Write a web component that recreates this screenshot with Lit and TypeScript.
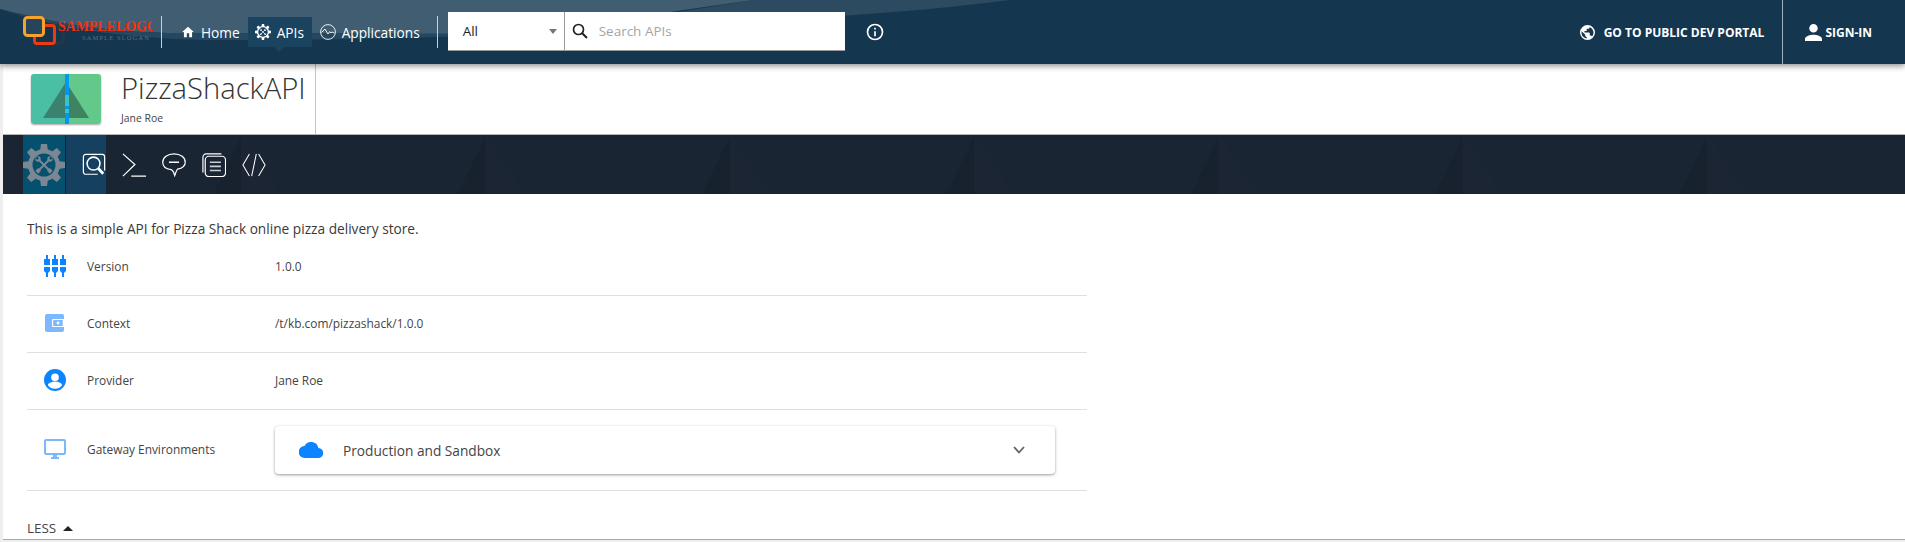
import { LitElement, css, html, svg } from 'lit';
import { customElement } from 'lit/decorators.js';

const GEAR_TEETH = [0, 45, 90, 135, 180, 225, 270, 315];

// same gear is used for the APIs nav item and the left menu button
const gear = (size: number, color: string, hole: string, inner = 11.5) => html`
  <svg width=${size} height=${size} viewBox="0 0 42 42">
    ${GEAR_TEETH.map((a) => svg`<path d="M17 7 18 0H24L25 7Z" fill=${color} transform="rotate(${a} 21 21)"></path>`)}
    <circle cx="21" cy="21" r="16" fill=${color}></circle>
    <circle cx="21" cy="21" r=${inner} fill=${hole}></circle>
    <path d="M15 15 27 27M27 15 15 27" stroke=${color} stroke-width="1.900" stroke-linecap="round"></path>
    <circle cx="15" cy="15" r="2.700" fill=${color}></circle>
    <circle cx="27" cy="15" r="2.700" fill=${color}></circle>
    <circle cx="14.200" cy="14.200" r="1.300" fill=${hole}></circle>
    <circle cx="27.800" cy="14.200" r="1.300" fill=${hole}></circle>
    <rect x="24.800" y="24.800" width="4" height="4" transform="rotate(45 26.800 26.800)" fill=${color}></rect>
    <rect x="13.200" y="24.800" width="4" height="4" transform="rotate(45 15.200 26.800)" fill=${color}></rect>
  </svg>
`;

@customElement('app-root')
export class AppRoot extends LitElement {
  static override styles = css`
    :host {
      display: block;
      height: 542px;
      overflow: hidden;
      background: #eeeeee;
      font-family: 'Open Sans', 'Noto Sans', sans-serif;
      color: #3b3b3b;
    }
    svg {
      display: block;
      flex: none;
    }

    /* top bar */
    .topbar {
      position: relative;
      z-index: 2;
      height: 64px;
      display: flex;
      align-items: center;
      background: #15364f;
      color: #fff;
      box-shadow: 0 2px 6px rgba(0, 0, 0, 0.45);
    }
    .wave {
      position: absolute;
      left: 0;
      top: 0;
    }
    .topbar > *:not(.wave) {
      position: relative;
    }
    .logo {
      width: 130px;
      height: 32px;
      margin-left: 23px;
      overflow: hidden;
      position: relative;
      flex: none;
    }
    .logo-mark {
      position: absolute;
      left: 0;
      top: 0;
    }
    .logo-name {
      position: absolute;
      left: 35px;
      top: 2px;
      font: bold 13.9px/18px 'Liberation Serif', serif;
      color: #f0300f;
      white-space: nowrap;
    }
    .logo-slogan {
      position: absolute;
      left: 59px;
      top: 18px;
      font: 6.5px/8px 'Liberation Serif', serif;
      letter-spacing: 1.1px;
      color: #5d6f7d;
      white-space: nowrap;
    }
    .vline {
      width: 1px;
      height: 32px;
      background: #c9d0d6;
      flex: none;
    }
    .nav {
      display: flex;
      align-items: center;
      height: 30px;
      margin-left: 19px;
      font-size: 13.7px;
    }
    .nav-item {
      display: flex;
      align-items: center;
      gap: 6px;
      height: 30px;
      white-space: nowrap;
    }
    .nav-item.active {
      position: relative;
      width: 64px;
      margin: 0 8px 0 8px;
      padding-left: 7px;
      box-sizing: border-box;
      background: #1a4360;
    }
    .nav-item.active::after {
      content: '';
      position: absolute;
      left: 26px;
      bottom: -5px;
      border: 5px solid transparent;
      border-bottom: 0;
      border-top-color: #1a4360;
    }
    .nav + .vline {
      margin-left: 17px;
    }
    .search {
      display: flex;
      width: 397px;
      height: 39px;
      margin-left: 10px;
      margin-top: -1px;
      background: #fff;
      border-bottom: 1px solid #9a9a9a;
      box-sizing: border-box;
      font-size: 13.5px;
      flex: none;
    }
    .search-cat {
      width: 117px;
      height: 38px;
      display: flex;
      align-items: center;
      justify-content: space-between;
      padding: 0 7px 0 15px;
      box-sizing: border-box;
      border-right: 1px solid #9a9a9a;
      color: #222;
    }
    .search-cat i {
      border: 4px solid transparent;
      border-top: 5px solid #777;
      border-bottom: 0;
    }
    .search-box {
      display: flex;
      align-items: center;
      gap: 11px;
      padding-left: 7px;
      color: #a5a5a5;
    }
    .info {
      margin-left: 20px;
    }
    .spacer {
      flex: 1;
    }
    .portal {
      display: flex;
      align-items: center;
      gap: 9px;
      font-size: 12px;
      font-weight: 700;
      white-space: nowrap;
    }
    .topbar .divider {
      width: 1px;
      height: 64px;
      background: #9fb0bd;
      margin: 0 22px 0 18px;
    }
    .signin {
      display: flex;
      align-items: center;
      gap: 3px;
      margin-right: 33px;
      font-size: 12px;
      font-weight: 700;
    }

    /* main */
    .main {
      margin-left: 3px;
      background: #fff;
      height: 475px;
      border-bottom: 1px solid #a9a9a9;
    }
    .title-row {
      height: 71px;
      box-sizing: border-box;
      border-bottom: 1px solid #b5b5b5;
    }
    .title-box {
      width: 313px;
      height: 70px;
      box-sizing: border-box;
      border-right: 1px solid #c4c4c4;
      display: flex;
      padding-left: 28px;
    }
    .thumb {
      margin-top: 10px;
      width: 70px;
      height: 50px;
      border-radius: 3px;
      overflow: hidden;
      box-shadow: 0 1px 2px rgba(0, 0, 0, 0.35);
      flex: none;
    }
    .title-text {
      margin-left: 20px;
      white-space: nowrap;
    }
    .title-text h1 {
      margin: 5px 0 0;
      font-size: 29.2px;
      line-height: 38px;
      font-weight: 300;
      color: #333;
    }
    .title-text p {
      margin: 4px 0 0;
      font-size: 10.4px;
      line-height: 14px;
      color: #444;
    }
    .menu {
      position: relative;
      height: 59px;
      display: flex;
      background: #1a2533;
      overflow: hidden;
    }
    .shade {
      position: absolute;
      left: 0;
      top: 0;
    }
    .menu > .m {
      position: relative;
    }
    .m-settings {
      width: 42px;
      margin-left: 20px;
      height: 59px;
      display: flex;
      align-items: center;
      background: #05506e;
    }
    .m-overview {
      width: 40px;
      margin-left: 1px;
      height: 59px;
      display: flex;
      align-items: center;
      justify-content: flex-end;
      background: #16405f;
    }
    .m-overview + .m-icon {
      margin-left: 8px;
    }
    .m-icon {
      width: 40px;
      height: 59px;
      display: flex;
      align-items: center;
      justify-content: center;
    }
    .content {
      padding: 26px 0 0 24px;
    }
    .desc {
      margin: 0;
      font-size: 13.7px;
      line-height: 18px;
      color: #3a3a3a;
    }
    .rows {
      width: 1060px;
      margin-top: 3px;
    }
    .row {
      display: grid;
      grid-template-columns: 60px 188px 1fr;
      align-items: center;
      height: 57px;
      padding-bottom: 2px;
      box-sizing: border-box;
      border-bottom: 1px solid #dfdfdf;
      font-size: 11.9px;
      color: #444;
    }
    .row:first-child {
      height: 55px;
      padding-bottom: 4px;
    }
    .row.tall {
      height: 81px;
    }
    .row-icon {
      display: flex;
      justify-content: center;
      width: 56px;
    }
    .card {
      width: 780px;
      height: 48px;
      margin-top: 2px;
      display: flex;
      align-items: center;
      padding: 0 30px 0 24px;
      box-sizing: border-box;
      background: #fff;
      border-radius: 4px;
      box-shadow: 0 1px 3px rgba(0, 0, 0, 0.4);
      font-size: 13.7px;
      color: #444;
    }
    .card span {
      flex: 1;
      margin-left: 20px;
    }
    .less {
      display: flex;
      align-items: center;
      gap: 7px;
      margin-top: 28px;
      font-size: 13.4px;
      line-height: 18px;
      color: #444;
    }
    .less i {
      border: 5px solid transparent;
      border-bottom: 5px solid #222;
      border-top: 0;
    }
  `;

  override render() {
    return html`
      <div class="topbar">
        <svg class="wave" width="1905" height="64" viewBox="0 0 1905 64">
          <path d="M753 0 640 18C760 24 900 14 1010 0Z" fill="#2c4a60"></path>
          <path d="M0 9C60 24 110 33 180 33L500 34C560 30 620 22 670 12L753 0H0Z" fill="#415d72"></path>
          <path d="M180 33 500 34C460 38 300 40 220 40 140 40 60 30 0 9 60 24 110 33 180 33Z" fill="#25475f"></path>
        </svg>
        <div class="logo">
          <svg class="logo-mark" width="46" height="32" viewBox="0 0 46 32">
            <rect x="21.500" y="9.500" width="19" height="18" rx="3" fill="none" stroke="#22384a" stroke-width="3"></rect>
            <rect x="11.500" y="9.500" width="20" height="18" rx="2.500" fill="#16334b" stroke="#ee3a0e" stroke-width="3"></rect>
            <rect x="1.500" y="1.500" width="19" height="18" rx="3" fill="#27445a" stroke="#f6a22c" stroke-width="3"></rect>
          </svg>
          <div class="logo-name">SAMPLELOGO</div>
          <div class="logo-slogan">SAMPLE SLOGAN</div>
        </div>
        <div class="vline" style="margin-left:8px"></div>
        <div class="nav">
          <div class="nav-item">
            <svg width="14" height="14" viewBox="0 0 24 24" fill="#fff"><path d="M10 21v-7h4v7h5v-9h3L12 3 2 12h3v9z"></path></svg>
            Home
          </div>
          <div class="nav-item active">${gear(16, '#fff', '#1a4360', 12.5)} APIs</div>
          <div class="nav-item">
            <svg width="16" height="16" viewBox="0 0 16 16" fill="none" stroke="#fff" stroke-width="0.900">
              <circle cx="8" cy="8" r="7.400"></circle>
              <path d="M1.500 8.500 5 5l3 5 1.600-2.400 1.200 1.400 1.200-1 2.400 1"></path>
            </svg>
            Applications
          </div>
        </div>
        <div class="vline"></div>
        <div class="search">
          <div class="search-cat">All <i></i></div>
          <div class="search-box">
            <svg width="16" height="16" viewBox="0 0 16 16" fill="none" stroke="#222">
              <circle cx="6.500" cy="6.500" r="5" stroke-width="1.700"></circle>
              <path d="M10.200 10.200 15 15" stroke-width="2"></path>
            </svg>
            Search APIs
          </div>
        </div>
        <svg class="info" width="20" height="20" viewBox="0 0 24 24" fill="#fff"><path d="M11 7h2v2h-2zm0 4h2v6h-2zm1-9a10 10 0 1 0 0 20 10 10 0 0 0 0-20zm0 18a8 8 0 1 1 0-16 8 8 0 0 1 0 16z"></path></svg>
        <div class="spacer"></div>
        <div class="portal">
          <svg width="15" height="15" viewBox="2 2 20 20" fill="#fff"><path d="M12 2a10 10 0 1 0 0 20 10 10 0 0 0 0-20zm-1 17.900A8 8 0 0 1 4 12c0-.6.1-1.200.2-1.800L9 15v1c0 1.100.9 2 2 2zm6.900-2.500A2 2 0 0 0 16 16h-1v-3c0-.6-.4-1-1-1H8v-2h2c.6 0 1-.4 1-1V7h2c1.100 0 2-.9 2-2v-.4a8 8 0 0 1 2.900 12.800z"></path></svg>
          GO TO PUBLIC DEV PORTAL
        </div>
        <div class="divider"></div>
        <div class="signin">
          <svg width="17" height="17" viewBox="4 4 16 16" fill="#fff"><path d="M12 12a4 4 0 1 0 0-8 4 4 0 0 0 0 8zm0 2c-2.700 0-8 1.300-8 4v2h16v-2c0-2.700-5.300-4-8-4z"></path></svg>
          SIGN-IN
        </div>
      </div>

      <div class="main">
        <div class="title-row">
          <div class="title-box">
            <div class="thumb">
              <svg width="70" height="50" viewBox="0 0 70 50">
                <rect width="35" height="50" fill="#4abfa3"></rect>
                <rect x="35" width="35" height="50" fill="#62c98a"></rect>
                <path d="M12 44 35 8V44Z" fill="#3a8170"></path>
                <path d="M58 44 35 8V44Z" fill="#3f8460"></path>
                <rect x="34" width="4" height="50" fill="#0398f0"></rect>
                <rect x="34" y="21" width="4" height="11" fill="#39c3c8"></rect>
                <rect x="34" y="35" width="4" height="4" fill="#39c3c8"></rect>
              </svg>
            </div>
            <div class="title-text">
              <h1>PizzaShackAPI</h1>
              <p>Jane Roe</p>
            </div>
          </div>
        </div>

        <div class="menu">
          <svg class="shade" width="1902" height="59" viewBox="0 0 1902 59">
            <defs>
              <pattern id="tri" x="-6" width="244.300" height="59" patternUnits="userSpaceOnUse">
                <path d="M216 59 244.300 0V59Z" fill="#18222f"></path>
                <path d="M0 0 38 59H0Z" fill="#1c2533"></path>
              </pattern>
            </defs>
            <rect width="1902" height="59" fill="url(#tri)"></rect>
          </svg>
          <div class="m m-settings">${gear(42, '#7b8894', '#05506e')}</div>
          <div class="m m-overview">
            <svg width="24" height="24" viewBox="0 0 26 26" fill="none" stroke="#fff" stroke-width="1.300">
              <path d="M17 23H4a2.500 2.500 0 0 1-2.500-2.500V4A2.500 2.500 0 0 1 4 1.500h18A2.500 2.500 0 0 1 24.500 4v15"></path>
              <circle cx="12.500" cy="11.500" r="7" stroke-width="1.700"></circle>
              <path d="M17.500 16.500 23 22.500" stroke-width="3"></path>
            </svg>
          </div>
          <div class="m m-icon">
            <svg width="24" height="24" viewBox="0 0 26 26" fill="none" stroke="#fff" stroke-width="1.300">
              <path d="M1 1 14 12.500 1 25M10 25H26"></path>
            </svg>
          </div>
          <div class="m m-icon">
            <svg width="24" height="24" viewBox="0 0 26 26" fill="none" stroke="#fff" stroke-width="1.300">
              <path d="M13 1C6 1 .8 5 .8 10c0 5 4.500 7.500 9 8 1.500.5 3 2.500 4 6.500 1-2.500 1.500-5.500 3-7 5-1 8.400-3.500 8.400-7.500 0-5-5-9-12.200-9z"></path>
              <path d="M7.500 10H18.500" stroke-width="1.600"></path>
            </svg>
          </div>
          <div class="m m-icon">
            <svg width="24" height="24" viewBox="0 0 26 26" fill="none" stroke="#fff" stroke-width="1.300">
              <path d="M1 21V5c0-2 1.200-4 3.500-4H21"></path>
              <rect x="3.500" y="3.500" width="22" height="22" rx="4"></rect>
              <path d="M8.500 10H20.500M8.500 14.500H20.500M8.500 19H20.500" stroke="#c9ced3" stroke-width="1.800"></path>
            </svg>
          </div>
          <div class="m m-icon">
            <svg width="24" height="24" viewBox="0 0 26 26" fill="none" stroke="#fff" stroke-width="1.100">
              <path d="M8 1 1 13 8 25M18 1 25 13 18 25M15.500 1 10.500 25"></path>
            </svg>
          </div>
        </div>

        <div class="content">
          <p class="desc">This is a simple API for Pizza Shack online pizza delivery store.</p>
          <div class="rows">
            <div class="row">
              <div class="row-icon">
                <svg width="22" height="22" viewBox="0 0 22 22" fill="#0a84ff">
                  <path d="M2 0h2v4h2v6H0V4h2zM10 0h2v4h2v6H8V4h2zM18 0h2v4h2v6h-6V4h2z"></path>
                  <path d="M0 12h6v4l-2 2v4H2v-4l-2-2zM8 12h6v4l-2 2v4h-2v-4l-2-2zM16 12h6v4l-2 2v4h-2v-4l-2-2z"></path>
                </svg>
              </div>
              <div>Version</div>
              <div>1.0.0</div>
            </div>
            <div class="row">
              <div class="row-icon">
                <svg width="20" height="20" viewBox="0 0 20 20">
                  <rect width="19" height="18" y="1" rx="2" fill="#7db8ff"></rect>
                  <path d="M8 6h11v8H8a1 1 0 0 1-1-1V7a1 1 0 0 1 1-1z" fill="#fff"></path>
                  <rect x="8.200" y="7" width="9.500" height="6" fill="#7db8ff"></rect>
                  <circle cx="13" cy="10" r="1.400" fill="#fff"></circle>
                </svg>
              </div>
              <div>Context</div>
              <div>/t/kb.com/pizzashack/1.0.0</div>
            </div>
            <div class="row">
              <div class="row-icon">
                <svg width="22" height="22" viewBox="2 2 20 20" fill="#0a84ff">
                  <path d="M12 2a10 10 0 1 0 0 20 10 10 0 0 0 0-20zm0 4a3.500 3.500 0 1 1 0 7 3.500 3.500 0 0 1 0-7zm0 14c-2.700 0-5-1.300-6.400-3.300 0-2.100 4.300-3.300 6.400-3.300s6.400 1.200 6.400 3.300C17 18.700 14.700 20 12 20z"></path>
                </svg>
              </div>
              <div>Provider</div>
              <div>Jane Roe</div>
            </div>
            <div class="row tall">
              <div class="row-icon">
                <svg width="22" height="22" viewBox="1 2 22 20" fill="#7db8ff">
                  <path d="M21 2H3a2 2 0 0 0-2 2v12a2 2 0 0 0 2 2h7v2H8v2h8v-2h-2v-2h7a2 2 0 0 0 2-2V4a2 2 0 0 0-2-2zm0 14H3V4h18z"></path>
                </svg>
              </div>
              <div>Gateway Environments</div>
              <div class="card">
                <svg width="24" height="16" viewBox="0 4 24 16" fill="#0a84ff"><path d="M19.400 10A7.500 7.500 0 0 0 5.400 8 6 6 0 0 0 6 20h13a5 5 0 0 0 .4-10z"></path></svg>
                <span>Production and Sandbox</span>
                <svg width="12" height="8" viewBox="0 0 12 8" fill="none" stroke="#5f6368" stroke-width="1.800"><path d="M1 1 6 6.500 11 1"></path></svg>
              </div>
            </div>
          </div>
          <div class="less">LESS <i></i></div>
        </div>
      </div>
    `;
  }
}
